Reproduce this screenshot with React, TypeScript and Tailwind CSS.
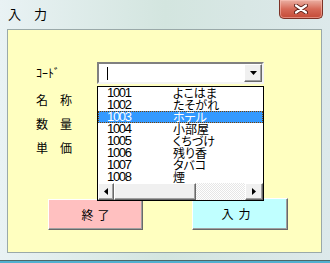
import React from "react";

const rows: [string, string][] = [
  ["1001", "よこはま"],
  ["1002", "たそがれ"],
  ["1003", "ホテル"],
  ["1004", "小部屋"],
  ["1005", "くちづけ"],
  ["1006", "残り香"],
  ["1007", "タバコ"],
  ["1008", "煙"],
];

const jp = { fontFamily: '"Noto Sans CJK JP", "Liberation Sans", sans-serif' };
const num = { fontFamily: '"Liberation Sans", "Noto Sans CJK JP", sans-serif' };

function Raised({ className, children }: { className: string; children?: React.ReactNode }) {
  return (
    <div
      className={
        "border border-t-white border-l-white border-r-[#696969] border-b-[#696969] shadow-[inset_-1px_-1px_0_#a0a0a0] " +
        className
      }
    >
      {children}
    </div>
  );
}

export default function App() {
  return (
    <div
      className="w-[330px] h-[263px] overflow-hidden flex flex-col bg-gradient-to-r from-[#e9f2f4] via-[#d3e5df] to-[#dde9eb] border-b-[2px] border-b-[#52b0d0]"
      style={jp}
    >
      {/* title bar */}
      <div className="h-[29px] flex items-start justify-between shrink-0">
        <div className="pl-[8px] pt-[6px] text-[13px] leading-[16px] text-black">入　力</div>
        <div className="mr-[7px] w-[44px] h-[19px] rounded-b-[5px] border border-t-0 border-[#7c3226] bg-gradient-to-b from-[#eab0a4] via-[#d66a58] to-[#c44a36] flex items-center justify-center shadow-[inset_0_0_0_1px_rgba(255,200,190,0.5)]">
          <svg width="14" height="10" viewBox="0 0 14 10">
            <path d="M2 1.5 L12 8.5 M12 1.5 L2 8.5" stroke="#5a1e16" strokeWidth="4" strokeLinecap="round" />
            <path d="M2 1.5 L12 8.5 M12 1.5 L2 8.5" stroke="#ffffff" strokeWidth="2.2" strokeLinecap="round" />
          </svg>
        </div>
      </div>

      {/* client area */}
      <div className="ml-[7px] w-[315px] h-[224px] shrink-0 border border-[#9aa9a9] bg-[#ffffc0] relative text-black">
        <div className="pt-[32px] pl-[28px]">
          <div className="flex items-center h-[22px]">
            <div className="w-[61px] text-[12px] leading-[14px]">ｺｰﾄﾞ</div>
            <div className="w-[167px] h-[22px] border-2 border-t-[#808080] border-l-[#808080] border-r-[#f4f4f4] border-b-[#f4f4f4] bg-white flex">
              <div className="flex-1 flex items-center pl-[8px]">
                <div className="w-[1px] h-[13px] bg-black" />
              </div>
              <Raised className="w-[18px] h-[18px] bg-[#f0f0f0] flex items-center justify-center">
                <svg width="7" height="4" viewBox="0 0 7 4">
                  <path d="M0 0 H7 L3.5 4 Z" fill="#000" />
                </svg>
              </Raised>
            </div>
          </div>
          <div className="mt-[4px] h-[24px] flex items-center text-[12px] leading-[14px]">名　称</div>
          <div className="h-[24px] flex items-center text-[12px] leading-[14px]">数　量</div>
          <div className="h-[24px] flex items-center text-[12px] leading-[14px]">単　価</div>

          <div className="mt-[38px] flex items-start">
            <Raised className="ml-[12px] mt-[1px] w-[95px] h-[31px] bg-[#ffc0c0] flex items-center justify-center gap-[4px] text-[12px] leading-[14px]">
              <span>終</span>
              <span>了</span>
            </Raised>
            <Raised className="ml-[49px] w-[96px] h-[32px] bg-[#c0ffff] flex items-center justify-center gap-[5px] pr-[8px] text-[12px] leading-[14px]">
              <span>入</span>
              <span>力</span>
            </Raised>
          </div>
        </div>

        {/* dropdown list overlay */}
        <div className="absolute left-[89px] top-[56px] w-[167px] h-[115px] border border-black bg-white flex flex-col">
          <div className="flex-1">
            {rows.map(([code, name]) => {
              const sel = code === "1003";
              return (
                <div
                  key={code}
                  className={
                    "h-[12px] flex items-center " +
                    (sel ? "bg-[#3399ff] text-white outline-1 outline-dotted outline-[#7a4000] -outline-offset-1" : "text-black")
                  }
                >
                  <div className="w-[75px] pl-[9px] text-[13px] leading-[12px] tracking-[-1.3px]" style={num}>
                    {code}
                  </div>
                  <div className="text-[12px] leading-[12px] [font-feature-settings:'palt']">{name}</div>
                </div>
              );
            })}
          </div>
          <div className="h-[17px] flex shrink-0">
            <Raised className="w-[16px] h-[17px] bg-[#f0f0f0] flex items-center justify-center">
              <svg width="4" height="7" viewBox="0 0 4 7">
                <path d="M4 0 V7 L0 3.5 Z" fill="#000" />
              </svg>
            </Raised>
            <Raised className="w-[82px] h-[17px] bg-[#f0f0f0]" />
            <div className="flex-1 h-[17px] bg-[repeating-conic-gradient(#e6e6e6_0_25%,#ffffff_0_50%)] bg-[length:2px_2px]" />
            <Raised className="w-[18px] h-[17px] bg-[#f0f0f0] flex items-center justify-center">
              <svg width="4" height="7" viewBox="0 0 4 7">
                <path d="M0 0 V7 L4 3.5 Z" fill="#000" />
              </svg>
            </Raised>
          </div>
        </div>
      </div>
      <div className="flex-1" />
      <div className="h-[1px] bg-[#4e6868] shrink-0" />
    </div>
  );
}
